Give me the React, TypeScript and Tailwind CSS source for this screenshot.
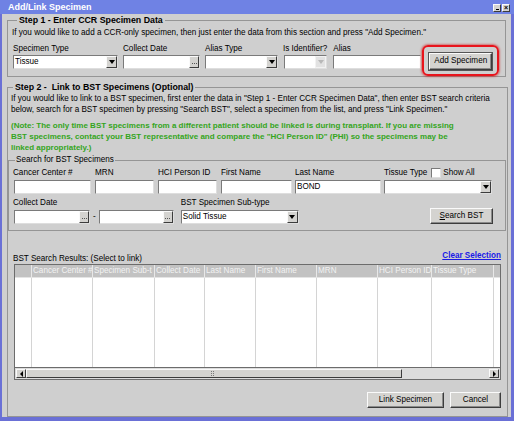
import React from 'react'

const inputBox =
  'h-[14px] bg-white border border-t-[#7a7a7a] border-l-[#7a7a7a] border-b-[#dedede] border-r-[#dedede] flex items-center'
const raised =
  'bg-[#d4d3d0] border border-t-[#fafafa] border-l-[#fafafa] border-b-[#3c3c3c] border-r-[#3c3c3c]'

function Arrow({ disabled }: { disabled?: boolean }) {
  return (
    <div className={`w-[11px] h-[12px] flex items-center justify-center ${disabled ? 'bg-[#e2e2e2] border border-[#f2f2f2]' : raised}`}>
      <div
        className={
          disabled
            ? 'w-0 h-0 border-x-[3px] border-x-transparent border-t-[4px] border-t-[#b8b8b8]'
            : 'w-0 h-0 border-x-[3px] border-x-transparent border-t-[4px] border-t-black'
        }
      />
    </div>
  )
}

function Dots() {
  return (
    <div className={`w-[10px] h-[12px] flex items-end justify-center pb-[3px] ${raised}`}>
      <div className="flex gap-[1px]">
        <span className="w-[1px] h-[1px] bg-[#555]" />
        <span className="w-[1px] h-[1px] bg-[#555]" />
        <span className="w-[1px] h-[1px] bg-[#555]" />
      </div>
    </div>
  )
}

function TextBox({ w, value }: { w: string; value?: string }) {
  return (
    <div className={`${inputBox} ${w} pl-[1px]`}>
      <span className="leading-[12px]">{value}</span>
    </div>
  )
}

function SelectBox({ w, value, disabled }: { w: string; value?: string; disabled?: boolean }) {
  return (
    <div className={`${inputBox} ${w} ${disabled ? 'bg-[#d6d6d6]' : ''} pl-[1px] pr-0 justify-between`}>
      <span className="leading-[12px]">{value}</span>
      <Arrow disabled={disabled} />
    </div>
  )
}

function DateBox({ w }: { w: string }) {
  return (
    <div className={`${inputBox} ${w} justify-end`}>
      <Dots />
    </div>
  )
}

function Label({ children, className = '' }: { children: React.ReactNode; className?: string }) {
  return <div className={`h-[11px] leading-[11px] whitespace-nowrap ${className}`}>{children}</div>
}

function Btn({ children, w, className = '' }: { children: React.ReactNode; w: string; className?: string }) {
  return (
    <div className={`${w} h-[16px] flex items-center justify-center ${raised} shadow-[inset_-1px_-1px_0_#8a8a8a] ${className}`}>
      {children}
    </div>
  )
}

// header labels are clipped in the grid, as in the original
const cols = [
  { w: 'w-[61px]', t: 'Cancer Center #' },
  { w: 'w-[62px]', t: 'Specimen Sub-t' },
  { w: 'w-[50px]', t: 'Collect Date' },
  { w: 'w-[51px]', t: 'Last Name' },
  { w: 'w-[61px]', t: 'First Name' },
  { w: 'w-[61px]', t: 'MRN' },
  { w: 'w-[54px]', t: 'HCI Person ID' },
  { w: 'w-[62px]', t: 'Tissue Type' },
]

export default function App() {
  return (
    <div className="w-[514px] h-[421px] bg-[#6a70d6] flex flex-col overflow-hidden text-[8.15px] text-black font-['Liberation_Sans',Arial,sans-serif]">
      {/* title bar */}
      <div className="h-[14px] shrink-0 bg-[#6f82e4] flex items-center justify-between pl-[8px] pr-[4px]">
        <span className="text-white font-bold text-[9px] leading-[12px]">Add/Link Specimen</span>
        <div className="flex gap-[1px] pt-[1px]">
          <div className={`w-[8px] h-[8px] ${raised} flex items-end justify-center pb-[1px]`}>
            <span className="w-[3px] h-[1px] bg-black" />
          </div>
          <div className={`w-[8px] h-[8px] ${raised} flex items-center justify-center text-[7px] leading-[6px] font-bold`}>×</div>
        </div>
      </div>

      <div className="flex-1 bg-[#cfcfcf] ml-[2px] mr-[3px] mb-[4px] flex flex-col">
        {/* step 1 */}
        <fieldset className="ml-[5px] w-[499px] border border-[#959595] px-[4px] pb-[7px]">
          <legend className="ml-[5px] px-[2px] font-bold text-[8.8px] leading-[12px]">Step 1 - Enter CCR Specimen Data</legend>
          <div className="leading-[11px] pt-[1px] whitespace-nowrap">
            If you would like to add a CCR-only specimen, then just enter the data from this section and press "Add Specimen."
          </div>
          <div className="flex items-end mt-[5px] ml-[1px]">
            <div className="flex flex-col gap-[1px]">
              <Label>Specimen Type</Label>
              <SelectBox w="w-[105px]" value="Tissue" />
            </div>
            <div className="flex flex-col gap-[1px] ml-[5px]">
              <Label>Collect Date</Label>
              <DateBox w="w-[77px]" />
            </div>
            <div className="flex flex-col gap-[1px] ml-[5px]">
              <Label>Alias Type</Label>
              <SelectBox w="w-[73px]" />
            </div>
            <div className="flex flex-col gap-[1px] ml-[6px]">
              <Label className="-ml-[1px]">Is Identifier?</Label>
              <SelectBox w="w-[43px]" disabled />
            </div>
            <div className="flex flex-col gap-[1px] ml-[6px]">
              <Label>Alias</Label>
              <TextBox w="w-[88px]" />
            </div>
            <div className="relative ml-[8px] -mb-[1px]">
              <Btn w="w-[63px]" className="h-[17px] border-[#333] outline outline-1 outline-[#555]">Add Specimen</Btn>
              <span className="absolute -left-[7px] -right-[7px] -top-[8px] -bottom-[6px] border-2 border-[#e8141c] rounded-[6px] shadow-[0_0_2px_1px_rgba(210,0,0,0.45)]" />
            </div>
          </div>
        </fieldset>

        {/* step 2 */}
        <fieldset className="ml-[5px] mt-[4px] w-[501px] flex-1 border border-[#959595] pb-[8px] flex flex-col">
          <legend className="ml-[5px] px-[2px] font-bold text-[8.8px] leading-[12px] whitespace-pre">Step 2 -  Link to BST Specimens (Optional)</legend>
          <div className="px-[3px] leading-[11px] whitespace-nowrap">
            <div>If you would like to link to a BST specimen, first enter the data in "Step 1 - Enter CCR Specimen Data", then enter BST search criteria</div>
            <div>below, search for a BST specimen by pressing "Search BST", select a specimen from the list, and press "Link Specimen."</div>
            <div className="mt-[5px] font-bold text-[#34a51c] text-[8px]">
              <div>(Note: The only time BST specimens from a different patient should be linked is during transplant. If you are missing</div>
              <div>BST specimens, contact your BST representative and compare the "HCI Person ID" (PHI) so the specimens may be</div>
              <div>linked appropriately.)</div>
            </div>
          </div>

          {/* search group */}
          <fieldset className="mt-[1px] mr-[1px] border border-[#959595] pl-[5px] pb-[6px]">
            <legend className="ml-[1px] px-[1px] leading-[12px]">Search for BST Specimens</legend>
            <div className="flex items-end pt-[1px]">
              <div className="flex flex-col gap-[2px]">
                <Label className="-ml-[1px]">Cancer Center #</Label>
                <TextBox w="w-[77px]" />
              </div>
              <div className="flex flex-col gap-[2px] ml-[4px]">
                <Label>MRN</Label>
                <TextBox w="w-[59px]" />
              </div>
              <div className="flex flex-col gap-[2px] ml-[4px]">
                <Label>HCI Person ID</Label>
                <TextBox w="w-[59px]" />
              </div>
              <div className="flex flex-col gap-[2px] ml-[4px]">
                <Label>First Name</Label>
                <TextBox w="w-[71px]" />
              </div>
              <div className="flex flex-col gap-[2px] ml-[3px]">
                <Label>Last Name</Label>
                <TextBox w="w-[86px]" value="BOND" />
              </div>
              <div className="flex flex-col gap-[2px] ml-[3px]">
                <div className="flex items-center h-[11px]">
                  <span className="leading-[11px]">Tissue Type</span>
                  <span className="ml-[4px] w-[10px] h-[10px] bg-white border border-t-[#7a7a7a] border-l-[#7a7a7a] border-b-[#dedede] border-r-[#dedede]" />
                  <span className="ml-[2px] leading-[11px]">Show All</span>
                </div>
                <SelectBox w="w-[108px]" />
              </div>
            </div>
            <div className="flex items-end mt-[3px]">
              <div className="flex flex-col gap-[2px]">
                <Label className="-ml-[1px]">Collect Date</Label>
                <DateBox w="w-[76px]" />
              </div>
              <span className="ml-[3px] mr-[3px] mb-[3px] leading-[8px]">-</span>
              <DateBox w="w-[75px]" />
              <div className="flex flex-col gap-[2px] ml-[7px]">
                <Label>BST Specimen Sub-type</Label>
                <SelectBox w="w-[118px]" value="Solid Tissue" />
              </div>
              <Btn w="w-[63px]" className="ml-auto mr-[12px]">
                <span>
                  <span className="underline">S</span>earch BST
                </span>
              </Btn>
            </div>
          </fieldset>

          {/* results */}
          <div className="flex items-end justify-between mt-[19px] pl-[5px] pr-[6px]">
            <span className="leading-[11px]">BST Search Results: (Select to link)</span>
            <span className="font-bold text-[#1a1ae6] underline leading-[11px] mb-[3px]">Clear Selection</span>
          </div>
          <div className="ml-[6px] w-[487px] border border-[#6c6c6c] flex flex-col">
            <div className="flex h-[13px] bg-[#c2c2c2] text-[#f2f2f2] border-b border-[#e4e4e4]">
              <div className="w-[17px] shrink-0 border-r border-[#e8e8e8]" />
              {cols.map((c) => (
                <div key={c.t} className={`${c.w} shrink-0 overflow-hidden whitespace-nowrap border-r border-[#e8e8e8] pl-[1px] leading-[12px]`}>
                  {c.t}
                </div>
              ))}
              <div className="flex-1" />
            </div>
            <div className="flex h-[89px] bg-white">
              <div className="w-[17px] shrink-0 border-r border-[#d4d4d4]" />
              {cols.map((c) => (
                <div key={c.t} className={`${c.w} shrink-0 border-r border-[#d4d4d4]`} />
              ))}
              <div className="flex-1" />
            </div>
            <div className="flex h-[12px] bg-[#dcdcdc] border-t border-[#6c6c6c] p-[1px]">
              <div className={`w-[10px] h-full flex items-center justify-center ${raised}`}>
                <div className="w-0 h-0 border-y-[3px] border-y-transparent border-r-[3px] border-r-black" />
              </div>
              <div className={`w-[376px] h-full flex items-center justify-center ${raised}`}>
                <svg width="6" height="5" viewBox="0 0 6 5">
                  <rect x="0" y="0" width="1" height="1" fill="#777" />
                  <rect x="2" y="0" width="1" height="1" fill="#777" />
                  <rect x="0" y="2" width="1" height="1" fill="#777" />
                  <rect x="2" y="2" width="1" height="1" fill="#777" />
                  <rect x="0" y="4" width="1" height="1" fill="#777" />
                  <rect x="2" y="4" width="1" height="1" fill="#777" />
                </svg>
              </div>
              <div className="flex-1" />
              <div className={`w-[10px] h-full flex items-center justify-center ${raised}`}>
                <div className="w-0 h-0 border-y-[3px] border-y-transparent border-l-[3px] border-l-black" />
              </div>
            </div>
          </div>

          <div className="mt-auto flex justify-end gap-[6px] pr-[6px]">
            <Btn w="w-[77px]">Link Specimen</Btn>
            <Btn w="w-[51px]">Cancel</Btn>
          </div>
        </fieldset>
      </div>
    </div>
  )
}
